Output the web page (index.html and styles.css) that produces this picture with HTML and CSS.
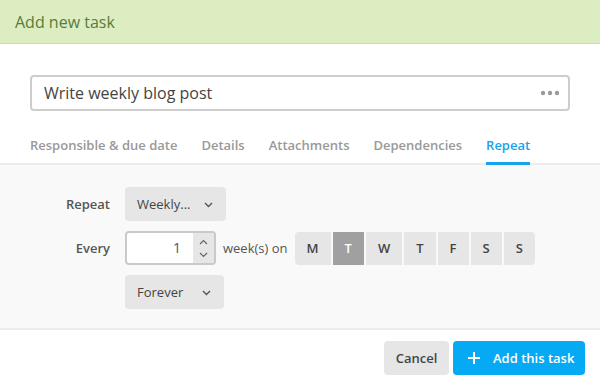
FILE: index.html
```html
<!DOCTYPE html>
<html lang="en">
  <head>
    <meta charset="UTF-8" />
    <title>Add new task</title>
    <link rel="stylesheet" href="styles.css">
  </head>
  <body>
    <div class="modal">
      <div class="modal-head">Add new task</div>

      <div class="task-name">
        <div class="name-input">
          <span>Write weekly blog post</span>
          <svg class="dots" width="20" height="6" viewBox="0 0 20 6">
            <circle cx="3" cy="3" r="2.2" fill="#9a9a9a" />
            <circle cx="10" cy="3" r="2.2" fill="#9a9a9a" />
            <circle cx="17" cy="3" r="2.2" fill="#9a9a9a" />
          </svg>
        </div>
      </div>

      <ul class="tabs">
        <li>Responsible &amp; due date</li>
        <li>Details</li>
        <li>Attachments</li>
        <li>Dependencies</li>
        <li class="active">Repeat</li>
      </ul>

      <div class="repeat-panel">
        <label class="row-label">Repeat</label>
        <div class="row">
          <div class="select select-weekly">
            Weekly...
            <svg class="chev" width="9" height="6" viewBox="0 0 9 6"><path d="M1 1l3.5 3.5L8 1" fill="none" stroke="#555" stroke-width="1.4" /></svg>
          </div>
        </div>

        <label class="row-label">Every</label>
        <div class="row">
          <div class="number">
            <span class="number-value">1</span>
            <span class="spinner">
              <svg width="9" height="6" viewBox="0 0 9 6"><path d="M1 5l3.5-3.5L8 5" fill="none" stroke="#666" stroke-width="1.2" /></svg>
              <svg width="9" height="6" viewBox="0 0 9 6"><path d="M1 1l3.5 3.5L8 1" fill="none" stroke="#666" stroke-width="1.2" /></svg>
            </span>
          </div>
          <span class="unit">week(s) on</span>
          <div class="days">
            <span class="day">M</span>
            <span class="day selected">T</span>
            <span class="day">W</span>
            <span class="day">T</span>
            <span class="day">F</span>
            <span class="day">S</span>
            <span class="day">S</span>
          </div>
        </div>

        <span></span>
        <div class="row">
          <div class="select select-forever">
            Forever
            <svg class="chev" width="9" height="6" viewBox="0 0 9 6"><path d="M1 1l3.5 3.5L8 1" fill="none" stroke="#555" stroke-width="1.4" /></svg>
          </div>
        </div>
      </div>

      <div class="modal-foot">
        <button class="btn btn-cancel">Cancel</button>
        <button class="btn btn-add">
          <svg width="12" height="12" viewBox="0 0 12 12"><path d="M6 0v12M0 6h12" stroke="#fff" stroke-width="2" /></svg>
          Add this task
        </button>
      </div>
    </div>
  </body>
</html>
```

FILE: styles.css
```css
body {
  margin: 0;
  padding: 0;
  font-family: "Open Sans", "Noto Sans", sans-serif;
  background-color: #fff;
  color: #444;
}

.modal {
  width: 600px;
}

.modal-head {
  height: 43px;
  line-height: 44px;
  padding-left: 15px;
  font-size: 16px;
  color: #5a7b3b;
  background-color: #dcedc2;
  border-bottom: 1px solid #c8dfaa;
}

.task-name {
  padding: 31px 30px 0;
}

.name-input {
  height: 32px;
  border: 2px solid #cdcdcd;
  border-radius: 4px;
  display: flex;
  align-items: center;
  justify-content: space-between;
  padding: 0 8px 0 12px;
  font-size: 16px;
  color: #444;
}

.tabs {
  list-style: none;
  margin: 18px 0 0;
  padding: 0 30px;
  display: flex;
  gap: 24px;
  border-bottom: 2px solid #ececec;
}

.tabs li {
  font-size: 13px;
  font-weight: 600;
  color: #999;
  padding: 7px 0 9px;
  line-height: 18px;
}

.tabs li.active {
  color: #16a2ec;
  border-bottom: 3px solid #16a2ec;
  padding-bottom: 6px;
  margin-bottom: -2px;
}

.repeat-panel {
  background-color: #f9f9f9;
  border-bottom: 2px solid #ececec;
  padding: 22px 0 19px;
  display: grid;
  grid-template-columns: 110px 1fr;
  column-gap: 15px;
  row-gap: 10px;
  align-items: center;
}

.row-label {
  text-align: right;
  font-size: 13px;
  font-weight: 600;
  color: #555;
}

.row {
  display: flex;
  align-items: center;
  height: 34px;
}

.select {
  height: 34px;
  box-sizing: border-box;
  background-color: #e6e6e6;
  border-radius: 4px;
  display: flex;
  align-items: center;
  justify-content: space-between;
  padding: 0 13px 0 12px;
  font-size: 13px;
  color: #444;
}

.select-weekly {
  width: 101px;
}

.select-forever {
  width: 99px;
}

.chev {
  margin-top: 1px;
}

.number {
  width: 91px;
  height: 34px;
  box-sizing: border-box;
  border: 2px solid #c9c9c9;
  border-radius: 4px;
  display: flex;
  overflow: hidden;
  background-color: #fff;
}

.number-value {
  flex: 1;
  text-align: right;
  padding-right: 12px;
  line-height: 30px;
  font-size: 14px;
  color: #555;
}

.spinner {
  width: 21px;
  background-color: #e6e6e6;
  display: flex;
  flex-direction: column;
  align-items: center;
  justify-content: center;
  gap: 7px;
}

.unit {
  margin-left: 7px;
  margin-right: 7px;
  font-size: 13px;
  color: #555;
}

.days {
  display: flex;
  gap: 2px;
}

.day {
  min-width: 31px;
  box-sizing: border-box;
  height: 33px;
  line-height: 33px;
  padding: 0 12px;
  text-align: center;
  background-color: #e6e6e6;
  font-size: 13px;
  font-weight: 600;
  color: #444;
}

.day:first-child {
  border-radius: 4px 0 0 4px;
}

.day:last-child {
  border-radius: 0 4px 4px 0;
}

.day.selected {
  background-color: #a0a0a0;
  color: #fff;
}

.modal-foot {
  display: flex;
  justify-content: flex-end;
  gap: 4px;
  padding: 11px 15px 0;
}

.btn {
  height: 34px;
  border: none;
  border-radius: 4px;
  font-family: inherit;
  font-size: 13px;
  font-weight: 600;
  cursor: pointer;
  display: flex;
  align-items: center;
}

.btn-cancel {
  width: 65px;
  justify-content: center;
  background-color: #e6e6e6;
  color: #444;
}

.btn-add {
  width: 132px;
  padding: 0 0 0 15px;
  gap: 13px;
  background-color: #05a9f4;
  color: #fff;
}
```
